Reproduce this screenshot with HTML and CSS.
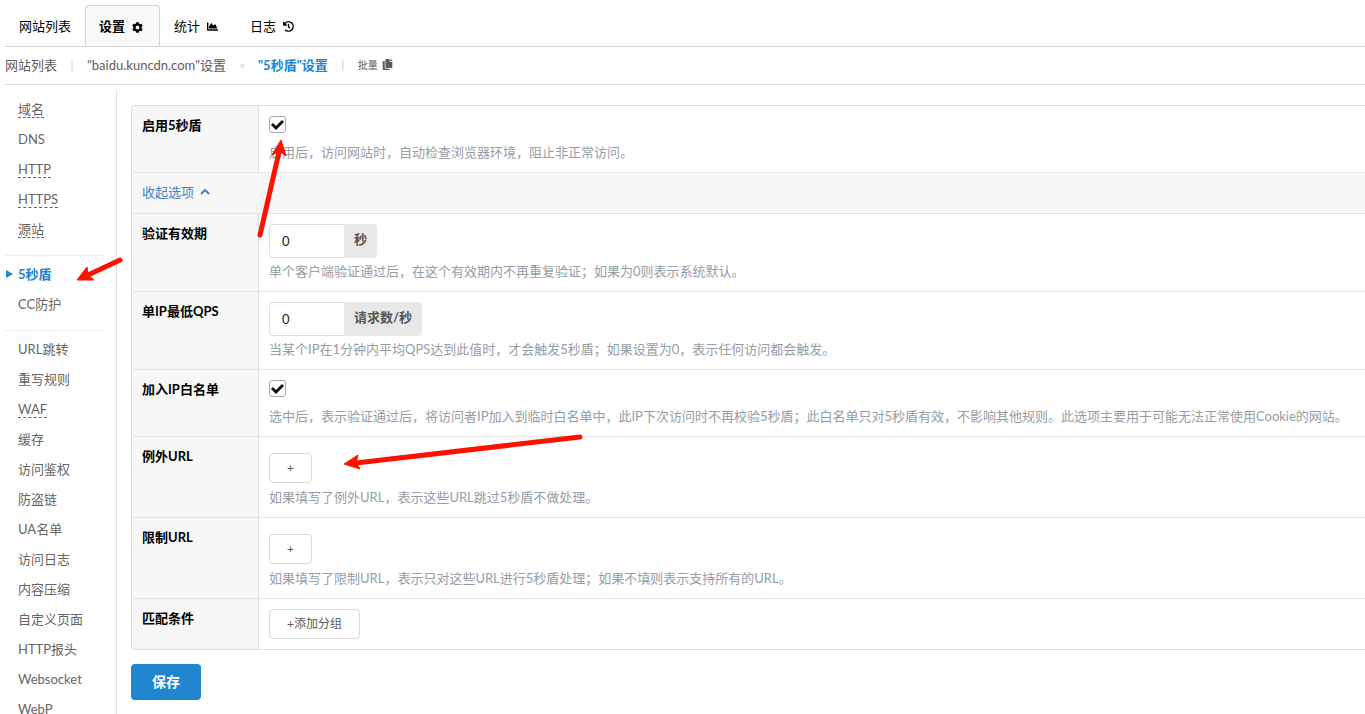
FILE: index.html
```html
<!DOCTYPE html>
<html lang="zh-CN">
<head>
<meta charset="utf-8">
<title>5秒盾设置</title>
<link rel="stylesheet" href="styles.css">
</head>
<body>
<nav class="tabs">
  <a class="tab" href="#">网站列表</a>
  <a class="tab tab-active" href="#">设置
    <svg class="icon" viewBox="0 0 512 512"><path fill-rule="evenodd" d="M487 316l-43-25c4-23 4-47 0-70l43-25c5-3 7-9 6-14-11-36-30-69-55-96-4-4-10-5-15-2l-43 25c-18-16-39-28-61-36V24c0-6-4-11-9-12-37-8-75-8-111 0-5 1-9 6-9 12v49c-22 8-43 20-61 36L87 84c-5-3-11-2-15 2-25 27-44 60-55 96-1 5 1 11 6 14l43 25c-4 23-4 47 0 70l-43 25c-5 3-7 9-6 14 11 36 30 69 55 96 4 4 10 5 15 2l43-25c18 16 39 28 61 36v49c0 6 4 11 9 12 37 8 75 8 111 0 5-1 9-6 9-12v-49c22-8 43-20 61-36l43 25c5 3 11 2 15-2 25-27 44-60 55-96 1-5-1-11-7-14zM256 346a90 90 0 1 1 0-180 90 90 0 0 1 0 180z"/></svg></a>
  <a class="tab" href="#">统计
    <svg class="icon" viewBox="0 0 512 512"><path d="M500 384H64V76c0-7-5-12-12-12H12C5 64 0 69 0 76v340c0 18 14 32 32 32h468c7 0 12-5 12-12v-40c0-7-5-12-12-12zM373 152l-85 56-80-105c-5-7-16-6-20 2L96 256v96h384l-90-195c-3-6-11-9-17-5z"/></svg></a>
  <a class="tab" href="#">日志
    <svg class="icon" viewBox="0 0 512 512"><path d="M504 255c0 137-111 249-248 249-59 0-114-21-156-55-11-9-12-25-2-35l11-12c9-9 22-9 32-2a184 184 0 1 0-15-277l52 52c15 15 4 41-17 41H24c-13 0-24-11-24-24V55c0-21 26-32 41-17l41 41A248 248 0 0 1 504 255zM323 333l10-13c8-11 6-26-4-34l-41-31V152c0-13-11-24-24-24h-16c-13 0-24 11-24 24v135l65 51c10 8 26 6 34-5z"/></svg></a>
</nav>
<nav class="crumbs">
  <a class="crumb" href="#">网站列表</a>
  <span class="sep">|</span>
  <a class="crumb" href="#">"baidu.kuncdn.com"设置</a>
  <span class="sep sep-wide">»</span>
  <a class="crumb crumb-active" href="#">"5秒盾"设置</a>
  <span class="sep">|</span>
  <a class="crumb crumb-small" href="#">批量
    <svg class="icon" viewBox="0 0 448 512"><path d="M320 448v40c0 13-11 24-24 24H24c-13 0-24-11-24-24V120c0-13 11-24 24-24h72v296c0 31 25 56 56 56zm0-344V0H152c-13 0-24 11-24 24v368c0 13 11 24 24 24h272c13 0 24-11 24-24V128H344c-13 0-24-11-24-24zm121-31L375 7a24 24 0 0 0-17-7h-6v96h96v-6a24 24 0 0 0-7-17z"/></svg></a>
</nav>
<main class="main">
  <nav class="side">
    <div class="group">
      <a class="item" href="#"><span class="dashed">域名</span></a>
      <a class="item" href="#">DNS</a>
      <a class="item" href="#"><span class="dashed">HTTP</span></a>
      <a class="item" href="#"><span class="dashed">HTTPS</span></a>
      <a class="item" href="#"><span class="dashed">源站</span></a>
    </div>
    <div class="group">
      <a class="item item-active" href="#"><svg class="marker" viewBox="0 0 8 8"><path d="M1 0L8 4L1 8z"/></svg>5秒盾</a>
      <a class="item" href="#">CC防护</a>
    </div>
    <div class="group">
      <a class="item" href="#">URL跳转</a>
      <a class="item" href="#">重写规则</a>
      <a class="item" href="#"><span class="dashed">WAF</span></a>
      <a class="item" href="#">缓存</a>
      <a class="item" href="#">访问鉴权</a>
      <a class="item" href="#">防盗链</a>
      <a class="item" href="#">UA名单</a>
      <a class="item" href="#">访问日志</a>
      <a class="item" href="#">内容压缩</a>
      <a class="item" href="#">自定义页面</a>
      <a class="item" href="#">HTTP报头</a>
      <a class="item" href="#">Websocket</a>
      <a class="item" href="#">WebP</a>
    </div>
  </nav>
  <form class="content">
    <table class="settings">
      <tbody>
      <tr>
        <th scope="row"><label for="enable">启用5秒盾</label></th>
        <td>
          <span class="check"><input type="checkbox" id="enable" checked><svg class="tick" viewBox="0 0 17 17"><path d="M3 8l4 4l7-7"/></svg></span>
          <p class="note note-check">启用后，访问网站时，自动检查浏览器环境，阻止非正常访问。</p>
        </td>
      </tr>
      <tr>
        <td class="more" colspan="2"><a class="toggle" href="#">收起选项 <svg class="chevron" viewBox="0 0 10 6"><path d="M1 5l4-4l4 4"/></svg></a></td>
      </tr>
      <tr>
        <th scope="row"><label for="life">验证有效期</label></th>
        <td>
          <div class="field"><input class="num" type="text" id="life" value="0"><span class="unit">秒</span></div>
          <p class="note">单个客户端验证通过后，在这个有效期内不再重复验证；如果为0则表示系统默认。</p>
        </td>
      </tr>
      <tr>
        <th scope="row"><label for="qps">单IP最低QPS</label></th>
        <td>
          <div class="field"><input class="num" type="text" id="qps" value="0"><span class="unit">请求数/秒</span></div>
          <p class="note">当某个IP在1分钟内平均QPS达到此值时，才会触发5秒盾；如果设置为0，表示任何访问都会触发。</p>
        </td>
      </tr>
      <tr>
        <th scope="row"><label for="white">加入IP白名单</label></th>
        <td>
          <span class="check"><input type="checkbox" id="white" checked><svg class="tick" viewBox="0 0 17 17"><path d="M3 8l4 4l7-7"/></svg></span>
          <p class="note note-check">选中后，表示验证通过后，将访问者IP加入到临时白名单中，此IP下次访问时不再校验5秒盾；此白名单只对5秒盾有效，不影响其他规则。此选项主要用于可能无法正常使用Cookie的网站。</p>
        </td>
      </tr>
      <tr>
        <th scope="row">例外URL</th>
        <td class="cell-add">
          <button class="btn" type="button">+</button>
          <p class="note">如果填写了例外URL，表示这些URL跳过5秒盾不做处理。</p>
        </td>
      </tr>
      <tr>
        <th scope="row">限制URL</th>
        <td class="cell-add">
          <button class="btn" type="button">+</button>
          <p class="note">如果填写了限制URL，表示只对这些URL进行5秒盾处理；如果不填则表示支持所有的URL。</p>
        </td>
      </tr>
      <tr>
        <th scope="row">匹配条件</th>
        <td><button class="btn" type="button">+添加分组</button></td>
      </tr>
      </tbody>
    </table>
    <button class="save" type="submit">保存</button>
  </form>
</main>
<svg class="arrows" width="600" height="480" viewBox="0 0 600 480">
  <path class="shaft" d="M120 260L88 275M260 235L279 152M580 437L356 463"/>
  <path class="head" d="M77 280L87 267L88 275L94 280zM281 140L272 155L279 151L286 156zM344 464L358 455L356 463L360 469z"/>
</svg>
</body>
</html>
```

FILE: styles.css
```css
* { box-sizing: border-box; }
body {
  position: relative;
  display: flex;
  flex-direction: column;
  height: 100vh;
  margin: 0;
  padding: 5px 0 0 5px;
  overflow: hidden;
  background: #fff;
  color: #000;
  font: 13px/18px Lato, "Noto Sans CJK SC", sans-serif;
}
a { color: inherit; text-decoration: none; }
button, input { font: inherit; }
.icon { width: 11px; height: 11px; fill: currentColor; }

.tabs { display: flex; flex: none; border-bottom: 1px solid #d4d4d5; }
.tab {
  display: flex;
  align-items: center;
  gap: 7px;
  height: 41px;
  padding: 0 14px;
}
.tab .icon { margin-top: 2px; }
.tab + .tab { padding-right: 18px; }
.tab-active {
  padding-left: 13px;
  border: 1px solid #d4d4d5;
  border-bottom: 0;
  border-radius: 4px 4px 0 0;
  background: #f8f8f8;
  font-weight: 700;
}
.tabs .tab-active { padding-right: 16px; }

.crumbs {
  display: flex;
  flex: none;
  align-items: center;
  height: 38px;
  padding-bottom: 2px;
  border-bottom: 1px solid #dededf;
  color: #5c5c5c;
}
.sep { width: 30px; text-align: center; color: #ccc; font-size: 12px; }
.sep-wide { width: 32px; }
.crumb-active { color: #2185d0; font-weight: 700; }
.crumb-small { display: flex; align-items: center; gap: 4px; font-size: 10px; }

.main { display: flex; flex: 1; min-height: 0; }
.side {
  flex: none;
  width: 112px;
  margin-top: 6px;
  padding: 3px 12px 0 0;
  border-right: 1px solid #dededf;
  color: #666;
}
.group + .group { margin-top: 11px; padding-top: 3px; border-top: 1px solid #eee; }
.item { display: flex; align-items: center; height: 30px; padding-left: 13px; }
.item-active { padding-left: 0; color: #2185d0; font-weight: 700; }
.marker { width: 8px; height: 8px; margin-right: 5px; fill: currentColor; }
.dashed { line-height: 16px; border-bottom: 1px dashed #666; }

.content { flex: 1; min-width: 0; padding: 20px 0 0 14px; }
.settings {
  width: 100%;
  border: 1px solid #dededf;
  border-right: 0;
  border-radius: 4px 0 0 4px;
  border-spacing: 0;
  overflow: hidden;
}
.settings th, .settings td { padding: 10px; vertical-align: top; text-align: left; }
.settings th { width: 127px; border-right: 1px solid #dededf; background: #f7f7f7; font-weight: 700; }
.settings tr + tr > * { border-top: 1px solid #e4e4e5; }
.settings .more { padding: 10px 10px 12px; background: #f7f7f7; }
.settings .cell-add { padding-top: 16px; }
.toggle { display: inline-flex; align-items: center; gap: 6px; color: #4183c4; }
.chevron { width: 10px; height: 6px; fill: none; stroke: currentColor; stroke-width: 2; }

.check { position: relative; display: block; width: 17px; height: 17px; }
.check input {
  display: block;
  appearance: none;
  width: 17px;
  height: 17px;
  margin: 0;
  border: 1px solid #a8a8a8;
  border-radius: 3px;
  background: #fff;
}
.tick {
  position: absolute;
  inset: 0;
  visibility: hidden;
  fill: none;
  stroke: #111;
  stroke-width: 3;
  pointer-events: none;
}
.check input:checked + .tick { visibility: visible; }

.note { margin: 4px 0 1px; color: #959da6; white-space: nowrap; }
.note-check { margin-top: 10px; }
.field { display: flex; height: 34px; }
.num {
  width: 75px;
  padding: 0 12px;
  border: 1px solid #dededf;
  border-right: 0;
  border-radius: 4px 0 0 4px;
  outline: 0;
  background: #fff;
  color: #222;
}
.unit {
  padding: 6px 10px;
  border-radius: 0 4px 4px 0;
  background: #e8e8e8;
  color: #555;
  font-weight: 700;
}
.btn {
  display: block;
  height: 30px;
  padding: 0 17px;
  border: 1px solid #d8d8d9;
  border-radius: 4px;
  background: #fff;
  color: #5a5a5a;
  font-size: 12px;
}
.cell-add .note { margin-top: 5px; }
.save {
  height: 36px;
  margin-top: 14px;
  padding: 0 21px;
  border: 0;
  border-radius: 4px;
  background: #2185d0;
  color: #fff;
  font-size: 14px;
  font-weight: 700;
}

.arrows { position: absolute; top: 0; left: 0; pointer-events: none; }
.shaft { fill: none; stroke: #f10; stroke-width: 5; stroke-linecap: round; }
.head { fill: #f10; stroke: #f10; stroke-width: 1; }
```
